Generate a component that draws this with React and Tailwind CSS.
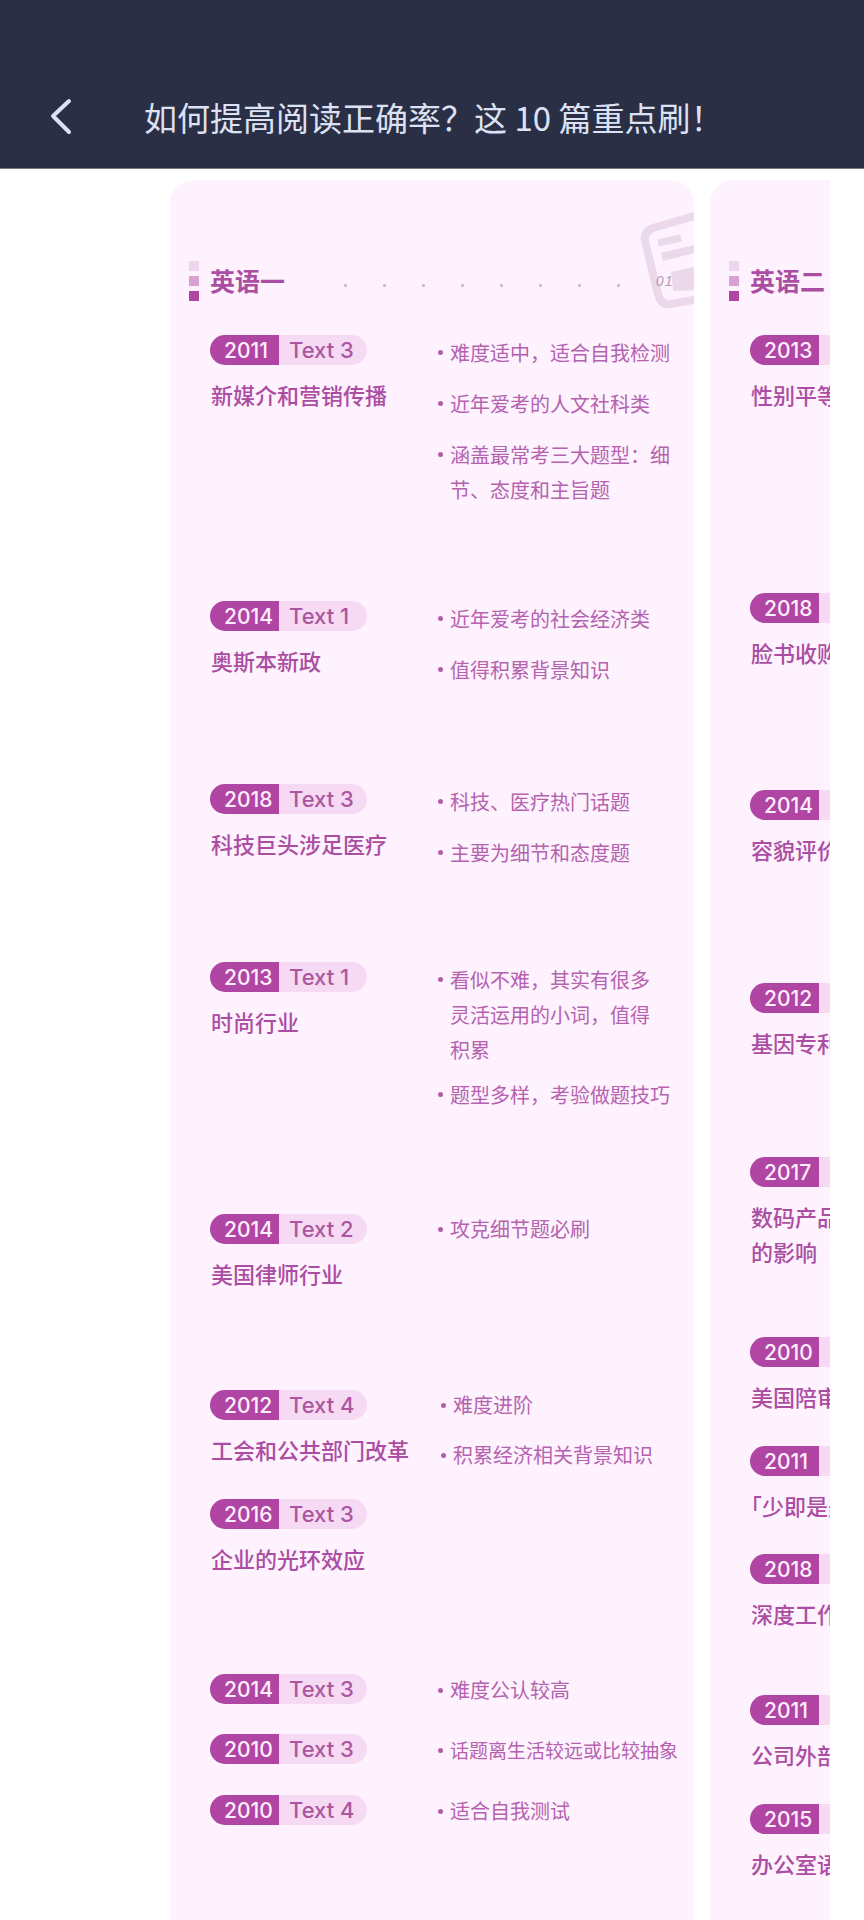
import React from "react";

const ENGLISH_ONE = [
  {
    year: "2011",
    text: "Text 3",
    title: ["新媒介和营销传播"],
    notes: ["难度适中，适合自我检测", "近年爱考的人文社科类", "涵盖最常考三大题型：细\n节、态度和主旨题"],
    row: "min-h-[266px]",
    list: "text-[20px] gap-4 leading-[35px]",
  },
  {
    year: "2014",
    text: "Text 1",
    title: ["奥斯本新政"],
    notes: ["近年爱考的社会经济类", "值得积累背景知识"],
    row: "min-h-[183px]",
    list: "text-[20px] gap-4 leading-[35px]",
  },
  {
    year: "2018",
    text: "Text 3",
    title: ["科技巨头涉足医疗"],
    notes: ["科技、医疗热门话题", "主要为细节和态度题"],
    row: "min-h-[178px]",
    list: "text-[20px] gap-4 leading-[35px]",
  },
  {
    year: "2013",
    text: "Text 1",
    title: ["时尚行业"],
    notes: ["看似不难，其实有很多\n灵活运用的小词，值得\n积累", "题型多样，考验做题技巧"],
    row: "min-h-[252px]",
    list: "text-[20px] gap-[10px] leading-[35px]",
  },
  {
    year: "2014",
    text: "Text 2",
    title: ["美国律师行业"],
    notes: ["攻克细节题必刷"],
    row: "min-h-[176px]",
    list: "text-[20px] leading-[30px]",
  },
  {
    year: "2012",
    text: "Text 4",
    title: ["工会和公共部门改革"],
    notes: ["难度进阶", "积累经济相关背景知识"],
    row: "min-h-[109px]",
    list: "text-[20px] gap-5 leading-[30px] pl-[3px]",
  },
  {
    year: "2016",
    text: "Text 3",
    title: ["企业的光环效应"],
    notes: [],
    row: "min-h-[175px]",
    list: "",
  },
  { year: "2014", text: "Text 3", title: [], notes: ["难度公认较高"], row: "min-h-[60px]", list: "text-[20px] leading-8" },
  {
    year: "2010",
    text: "Text 3",
    title: [],
    notes: ["话题离生活较远或比较抽象"],
    row: "min-h-[61px]",
    list: "text-[19px] leading-8",
  },
  { year: "2010", text: "Text 4", title: [], notes: ["适合自我测试"], row: "min-h-[61px]", list: "text-[20px] leading-8" },
];

const ENGLISH_TWO = [
  { year: "2013", title: ["性别平等"], row: "min-h-[258px]" },
  { year: "2018", title: ["脸书收购"], row: "min-h-[197px]" },
  { year: "2014", title: ["容貌评价"], row: "min-h-[193px]" },
  { year: "2012", title: ["基因专利"], row: "min-h-[174px]" },
  { year: "2017", title: ["数码产品", "的影响"], row: "min-h-[180px]" },
  { year: "2010", title: ["美国陪审"], row: "min-h-[109px]" },
  { year: "2011", title: ["「少即是美"], row: "min-h-[108px]" },
  { year: "2018", title: ["深度工作"], row: "min-h-[141px]" },
  { year: "2011", title: ["公司外部"], row: "min-h-[109px]" },
  { year: "2015", title: ["办公室语"], row: "min-h-[109px]" },
];

function Tag({ year, text }) {
  return (
    <div className="flex h-[30px] w-[157px] overflow-hidden rounded-full bg-[#f6daf4] font-['Inter',sans-serif] leading-[31px] font-medium">
      <span className="w-[69px] shrink-0 bg-[#b045a3] pl-[14px] text-[21px] text-[#fdeefc]">{year}</span>
      <span className="pl-[10px] text-[22px] text-[#ab569f]">{text}</span>
    </div>
  );
}

function Passage({ item }) {
  return (
    <div className="w-[228px] shrink-0">
      <Tag year={item.year} text={item.text} />
      {item.title.length > 0 && (
        <h3 className="mt-3 pl-px text-[22px] leading-[35px] font-medium whitespace-nowrap text-[#ab4da2] [text-spacing-trim:trim-start]">
          {item.title.map((line) => (
            <span key={line} className="block">
              {line}
            </span>
          ))}
        </h3>
      )}
    </div>
  );
}

function Notes({ notes, className }) {
  return (
    <ul className={`flex flex-col whitespace-nowrap text-[#b562af] ${className}`}>
      {notes.map((note) => (
        <li key={note} className="flex gap-[7px]">
          <span className="flex h-[1lh] items-center">
            <span className="size-[5px] rounded-full bg-[#b05faa]" />
          </span>
          <span className="whitespace-pre">{note}</span>
        </li>
      ))}
    </ul>
  );
}

function CardHeading({ title, children }) {
  return (
    <div className="relative flex h-10 items-center pl-[19px]">
      <div className="flex flex-col gap-[5px]">
        <span className="size-[10px] bg-[#f0d5ef]" />
        <span className="size-[10px] bg-[#d9a1d1]" />
        <span className="size-[10px] bg-[#b045a3]" />
      </div>
      <h2 className="ml-[11px] pb-[3px] text-[25px] leading-9 font-bold whitespace-nowrap text-[#ab4da2]">{title}</h2>
      {children}
    </div>
  );
}

function PaperIcon() {
  return (
    <svg className="absolute right-0 -bottom-2 h-[97px] w-[54px]" viewBox="0 0 54 97" fill="none" aria-hidden="true">
      <path
        d="M58 3 L13 16 Q3 20 5 29 L18 82 Q21 94 31 92 L58 87"
        stroke="#ecd8eb"
        strokeWidth="8"
        strokeLinejoin="round"
      />
      <path d="M18 31 L41 26" stroke="#ecd8eb" strokeWidth="7" />
      <path d="M22 45 L58 36" stroke="#ecd8eb" strokeWidth="8" />
      <path d="M31 60 L58 54 V78 L33 79 Z" fill="#ecd8eb" />
    </svg>
  );
}

export default function App() {
  return (
    <div className="flex min-h-screen flex-col bg-white font-['Noto_Sans_CJK_SC',sans-serif]">
      <header className="flex items-center border-b border-[#777a80] bg-[#2a2f45] pt-[68px] text-[#dde1f4]">
        <button type="button" aria-label="返回" className="ml-12 flex h-[100px] w-24 items-center">
          <svg className="h-10 w-7" viewBox="0 0 28 40" fill="none" stroke="currentColor" strokeWidth="4" strokeLinecap="round" strokeLinejoin="round">
            <path d="M21 3 L5 18 L21 34" />
          </svg>
        </button>
        <h1 className="pb-[3px] text-[33px] leading-[50px] whitespace-nowrap">如何提高阅读正确率？这 10 篇重点刷！</h1>
      </header>

      <main className="mr-[34px] ml-[170px] flex flex-1 gap-4 overflow-hidden pt-[11px]">
        <section className="w-[524px] shrink-0 overflow-hidden rounded-t-3xl bg-[#fdf2fe] pt-[81px]">
          <CardHeading title="英语一">
            <div className="ml-[59px] flex gap-9 pt-2" aria-hidden="true">
              {[0, 1, 2, 3, 4, 5, 6, 7].map((dot) => (
                <span key={dot} className="size-[3px] rounded-full bg-[#cfaccd]" />
              ))}
            </div>
            <PaperIcon />
            <span className="absolute right-5 text-[14px] tracking-widest text-[#b598b5] italic font-['Liberation_Sans',sans-serif]">
              01
            </span>
          </CardHeading>
          <div className="pt-[34px] pl-10">
            {ENGLISH_ONE.map((item, index) => (
              <article key={index} className={`flex ${item.row}`}>
                <Passage item={item} />
                <Notes notes={item.notes} className={item.list} />
              </article>
            ))}
          </div>
        </section>

        <section className="w-[524px] shrink-0 rounded-t-3xl bg-[#fdf2fe] pt-[81px]">
          <CardHeading title="英语二" />
          <div className="pt-[34px] pl-10">
            {ENGLISH_TWO.map((item, index) => (
              <article key={index} className={item.row}>
                <Passage item={item} />
              </article>
            ))}
          </div>
        </section>
      </main>
    </div>
  );
}
